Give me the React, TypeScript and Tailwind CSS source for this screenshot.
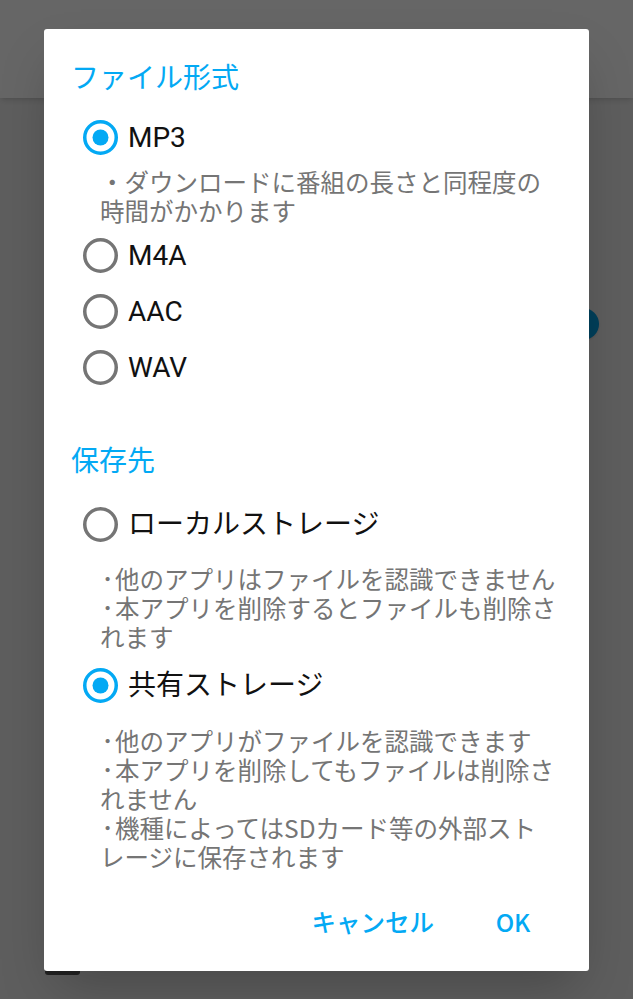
import React from "react";

const jp = { fontFamily: '"Noto Sans CJK JP", sans-serif' };
const label = { fontFamily: 'Roboto, "Noto Sans CJK JP", sans-serif' };

function Radio({ checked }: { checked: boolean }) {
  const color = checked ? "#03a9f4" : "#757575";
  return (
    <svg width="35" height="35" viewBox="0 0 35 35" className="shrink-0">
      <circle cx="17.5" cy="17.5" r="15.75" fill="none" stroke={color} strokeWidth="3.5" />
      {checked && <circle cx="17.5" cy="17.5" r="8" fill={color} />}
    </svg>
  );
}

function Option({ text, checked = false, className = "" }: { text: string; checked?: boolean; className?: string }) {
  return (
    <div className={`flex h-[56px] items-center pl-[39px] ${className}`}>
      <Radio checked={checked} />
      <span className="ml-[10px] text-[28px] leading-none text-[#111]" style={label}>
        {text}
      </span>
    </div>
  );
}

// "･" at line start gets its own narrow cell, like the reference
function Note({ lines, className = "" }: { lines: string[]; className?: string }) {
  return (
    <div className={`pl-[56px] text-[24.5px] leading-[29px] text-[#757575] ${className}`} style={jp}>
      {lines.map((l) => (
        <div key={l} className="whitespace-nowrap">
          {l.startsWith("･") ? (
            <>
              <span className="inline-block w-[15px] text-center">･</span>
              {l.slice(1)}
            </>
          ) : (
            l
          )}
        </div>
      ))}
    </div>
  );
}

export default function App() {
  return (
    <div className="relative h-[999px] w-full overflow-hidden bg-[#ececec]">
      <div className="h-[98px] bg-white shadow-md" />
      <div className="absolute left-[567px] top-[308px] h-[32px] w-[32px] rounded-full bg-[#009ee1] shadow" />
      <div className="absolute left-[45px] top-[958px] h-[17px] w-[35px] rounded-[3px] bg-[#555]" />

      <div className="absolute inset-0 flex items-center justify-center bg-black/60">
        <div className="flex h-[942px] w-[545px] flex-col rounded-[3px] bg-white shadow-2xl">
          <h2 className="mt-[27px] h-[40px] pl-[27px] text-[28px] leading-[40px] text-[#03a9f4]" style={jp}>
            ファイル形式
          </h2>
          <Option text="MP3" checked className="mt-[14px]" />
          <Note lines={["・ダウンロードに番組の長さと同程度の", "時間がかかります"]} className="mt-px" />
          <Option text="M4A" className="mt-[3px]" />
          <Option text="AAC" />
          <Option text="WAV" />

          <h2 className="mt-[43px] h-[40px] pl-[27px] text-[28px] leading-[40px] text-[#03a9f4]" style={jp}>
            保存先
          </h2>
          <Option text="ローカルストレージ" className="mt-[18px]" />
          <Note
            lines={["･他のアプリはファイルを認識できません", "･本アプリを削除するとファイルも削除さ", "れます"]}
            className="mt-[11px]"
          />
          <Option text="共有ストレージ" checked className="mt-[7px]" />
          <Note
            lines={[
              "･他のアプリがファイルを認識できます",
              "･本アプリを削除してもファイルは削除さ",
              "れません",
              "･機種によってはSDカード等の外部スト",
              "レージに保存されます",
            ]}
            className="mt-[12px]"
          />

          <div className="mt-auto mb-[17px] flex justify-end gap-[9px] pr-[20px]" style={jp}>
            <button type="button" className="h-[63px] px-[14px] text-[24.5px] font-medium text-[#03a9f4]">
              キャンセル
            </button>
            <button type="button" className="h-[63px] w-[112px] text-[24.5px] font-medium text-[#03a9f4]">
              OK
            </button>
          </div>
        </div>
      </div>
    </div>
  );
}
